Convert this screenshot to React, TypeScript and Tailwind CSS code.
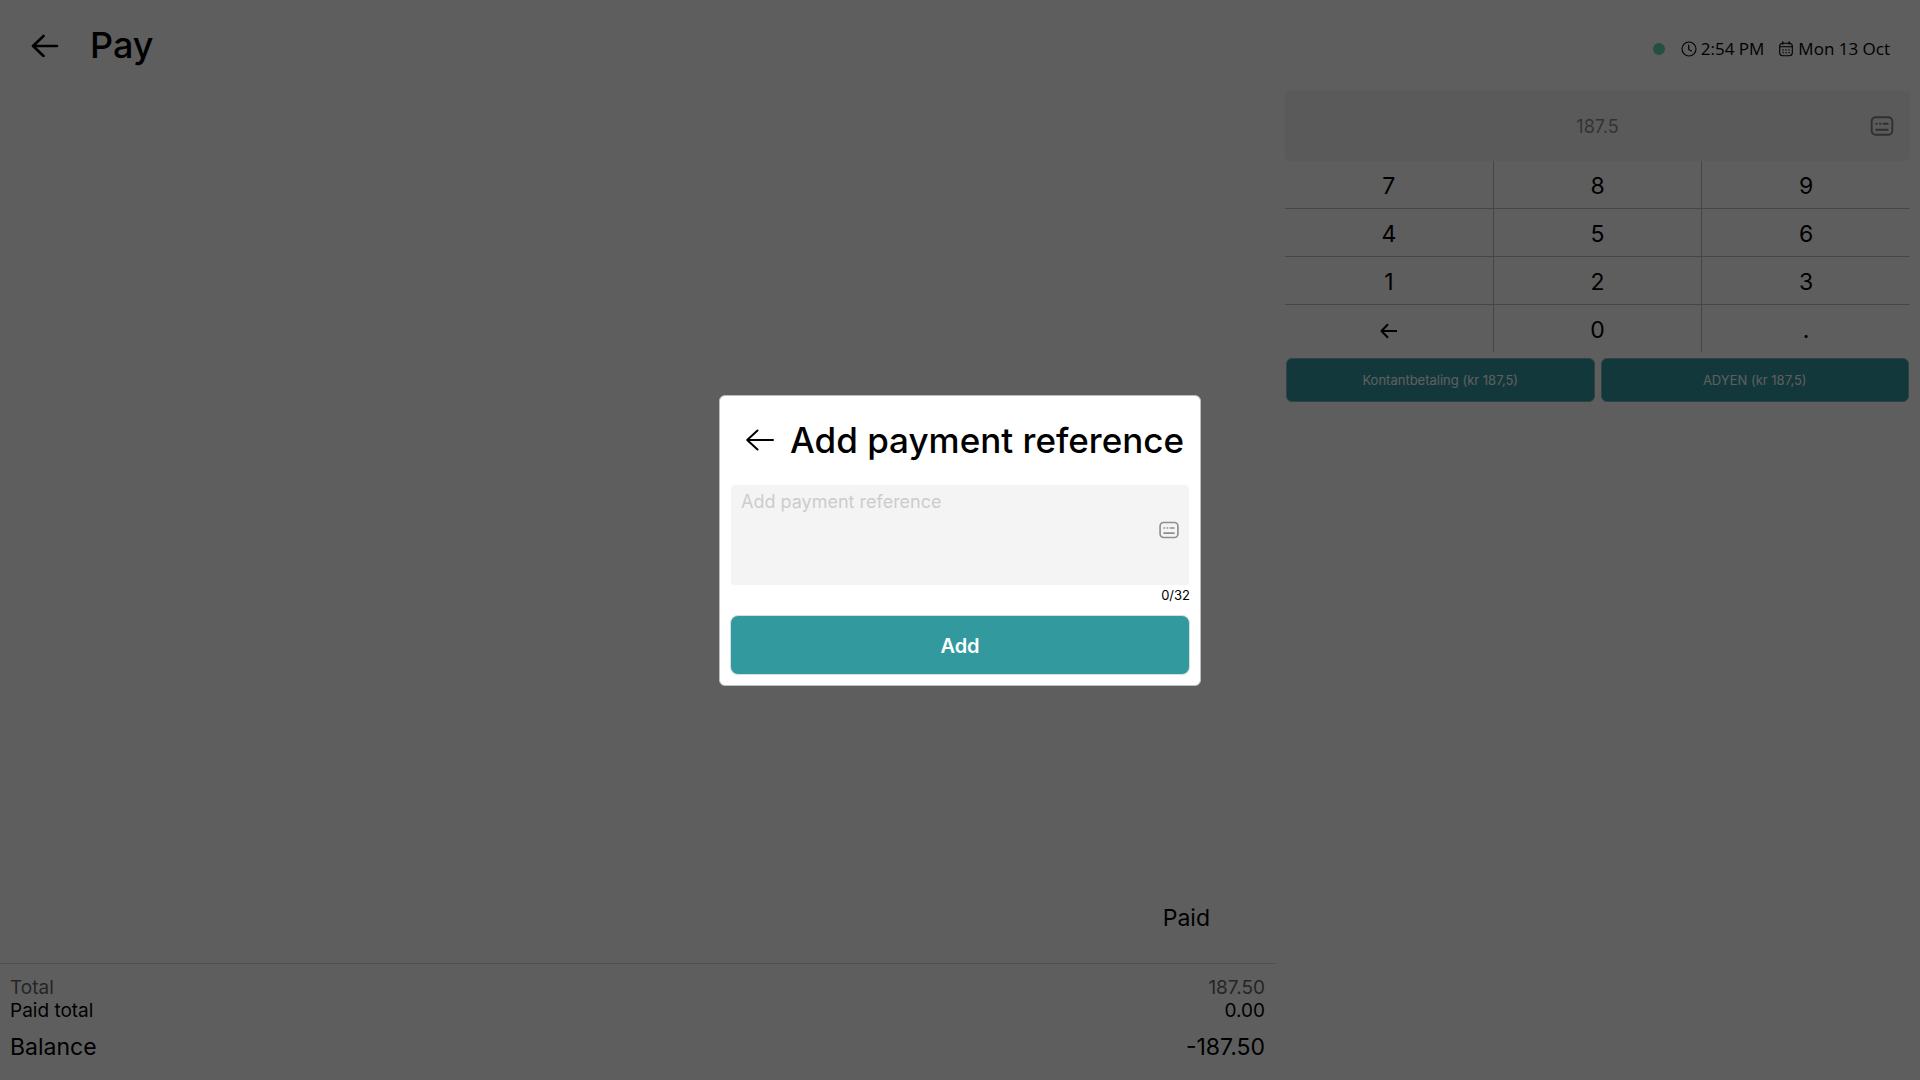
import { useState } from "react";

const keys = ["7", "8", "9", "4", "5", "6", "1", "2", "3", "back", "0", "."];

const payments = ["Kontantbetaling (kr 187,5)", "ADYEN (kr 187,5)"];

function ArrowLeft({ className }: { className: string }) {
  return (
    <svg viewBox="0 0 28 24" className={className} fill="none" stroke="currentColor" strokeWidth="2.6" strokeLinecap="round" strokeLinejoin="round" aria-hidden="true">
      <path d="M26 13H2M12.5 3L2 13L12.5 23" />
    </svg>
  );
}

function ThinArrowLeft({ className }: { className: string }) {
  return (
    <svg viewBox="0 0 28 22" className={className} fill="none" stroke="currentColor" strokeWidth="2" strokeLinecap="round" strokeLinejoin="round" aria-hidden="true">
      <path d="M27 11H1.2M11.5 1.5L1.2 11L11.5 20.5" />
    </svg>
  );
}

function KeyArrowLeft() {
  return (
    <svg viewBox="0 0 18 16" className="h-4 w-[18px]" fill="none" stroke="currentColor" strokeWidth="2" strokeLinejoin="round" aria-hidden="true">
      <path d="M17 8H1.5M8 1.2L1.5 8L8 14.8" />
    </svg>
  );
}

function KeyboardIcon({ className }: { className: string }) {
  return (
    <svg viewBox="0 0 22 19" className={className} fill="none" stroke="currentColor" strokeWidth="1.8" strokeLinecap="round" aria-hidden="true">
      <rect x="1.2" y="1.2" width="19.6" height="16.6" rx="3.8" />
      <path d="M5.5 7.3h.6M9 7.3h.6M12.5 7.3h4M5.5 13h11" />
    </svg>
  );
}

function ClockIcon() {
  return (
    <svg viewBox="0 0 16 16" className="size-4" fill="none" stroke="currentColor" strokeWidth="1.1" strokeLinecap="round" aria-hidden="true">
      <circle cx="8" cy="8" r="7" />
      <path d="M7.7 4v4.4l2.8 1.6" />
    </svg>
  );
}

function CalendarIcon() {
  return (
    <svg viewBox="0 0 16 16" className="size-4" fill="none" stroke="currentColor" strokeWidth="1.1" strokeLinecap="round" aria-hidden="true">
      <rect x="1.7" y="2.3" width="12.6" height="12.4" rx="3" />
      <path d="M2 5.8h12" />
      <path d="M4.8 1v2M11.2 1v2" strokeWidth="1.4" />
      <path d="M5 9h.1M8 9h.1M11 9h.1M5 11.7h.1M8 11.7h.1M11 11.7h.1" strokeWidth="1.4" />
    </svg>
  );
}

function Header() {
  return (
    <header className="flex h-[91px] items-start justify-between pl-[31px] pr-[30px]">
      <div className="flex h-[90px] items-center gap-[31px]">
        <button type="button" aria-label="Back">
          <ArrowLeft className="h-6 w-7" />
        </button>
        <h1 className="text-[36px] font-medium">Pay</h1>
      </div>
      <div className="flex h-[98px] items-center font-['Open_Sans','Noto_Sans',sans-serif] text-[17px]">
        <span className="mr-4 size-3 rounded-full bg-[#62d7b5]" />
        <span className="mr-[14px] flex items-center gap-1">
          <ClockIcon />
          2:54 PM
        </span>
        <span className="flex items-center gap-1">
          <CalendarIcon />
          Mon 13 Oct
        </span>
      </div>
    </header>
  );
}

function Summary() {
  return (
    <section className="flex flex-col justify-end">
      <div className="flex h-[63px] justify-end border-b border-[#d8d8d8] pr-[65px] text-[23px]">Paid</div>
      <dl className="px-[10px] pb-[17px] pt-[13px]">
        <div className="flex h-[23px] items-center justify-between text-[19px] text-[#666666]">
          <dt>Total</dt>
          <dd>187.50</dd>
        </div>
        <div className="flex h-[23px] items-center justify-between text-[19px]">
          <dt>Paid total</dt>
          <dd>0.00</dd>
        </div>
        <div className="mt-2 flex h-8 items-center justify-between text-[23px]">
          <dt>Balance</dt>
          <dd>-187.50</dd>
        </div>
      </dl>
    </section>
  );
}

function Keypad() {
  return (
    <section className="px-[10px]">
      <div className="flex h-[70px] items-center rounded bg-[#f4f4f4] pl-10 pr-4">
        <input
          aria-label="Amount"
          placeholder="187.5"
          className="min-w-0 flex-1 bg-transparent pt-px text-center text-[18px] outline-none placeholder:text-[#8c8c8c]"
        />
        <button type="button" aria-label="Open keyboard" className="text-[#808080]">
          <KeyboardIcon className="h-5 w-6" />
        </button>
      </div>
      <div className="grid grid-cols-3 gap-px bg-[#bdbdbd]">
        {keys.map((key) => (
          <button key={key} type="button" aria-label={key === "back" ? "Delete" : key} className="flex h-[47px] items-center justify-center bg-white pt-1 text-[23px]">
            {key === "back" ? <KeyArrowLeft /> : key}
          </button>
        ))}
      </div>
      <div className="mt-[6px] grid grid-cols-2 gap-1">
        {payments.map((label) => (
          <button key={label} type="button" className="mx-px h-11 rounded-md border border-[#79b9bd] bg-[#32999f] pt-[2px] text-[13px] text-white">
            {label}
          </button>
        ))}
      </div>
    </section>
  );
}

function ReferenceDialog() {
  const [reference, setReference] = useState("");

  return (
    <div className="fixed inset-0 flex items-center justify-center bg-black/63">
      <form
        role="dialog"
        aria-modal="true"
        aria-labelledby="dialog-title"
        className="flex w-[482px] flex-col rounded-md border border-[#bdbdbd] bg-white px-[10px] pb-[10px]"
        onSubmit={(event) => event.preventDefault()}
      >
        <div className="flex h-[89px] items-center gap-4 pl-4">
          <button type="button" aria-label="Close">
            <ThinArrowLeft className="h-[22px] w-7" />
          </button>
          <h2 id="dialog-title" className="whitespace-nowrap text-[35px] font-medium">
            Add payment reference
          </h2>
        </div>
        <div className="mx-px flex h-[100px] items-start rounded bg-[#f4f4f4] px-[10px]">
          <textarea
            aria-label="Payment reference"
            maxLength={32}
            value={reference}
            onChange={(event) => setReference(event.target.value)}
            placeholder="Add payment reference"
            className="h-full min-w-0 flex-1 resize-none bg-transparent pt-[3px] text-[18px] leading-7 outline-none placeholder:text-[#cccccc]"
          />
          <button type="button" aria-label="Open keyboard" className="mt-9 text-[#8f8f8f]">
            <KeyboardIcon className="h-[18px] w-5" />
          </button>
        </div>
        <p className="h-[30px] text-right text-[13px] leading-5">{reference.length}/32</p>
        <button type="submit" className="h-[60px] rounded-lg border border-[#d3dfe0] bg-[#32999f] pt-[2px] text-[20px] font-semibold text-white">
          Add
        </button>
      </form>
    </div>
  );
}

export default function App() {
  return (
    <div className="flex min-h-screen flex-col bg-white font-['Inter',sans-serif] text-black">
      <Header />
      <main className="grid flex-1 grid-cols-[85fr_43fr]">
        <Summary />
        <Keypad />
      </main>
      <ReferenceDialog />
    </div>
  );
}
